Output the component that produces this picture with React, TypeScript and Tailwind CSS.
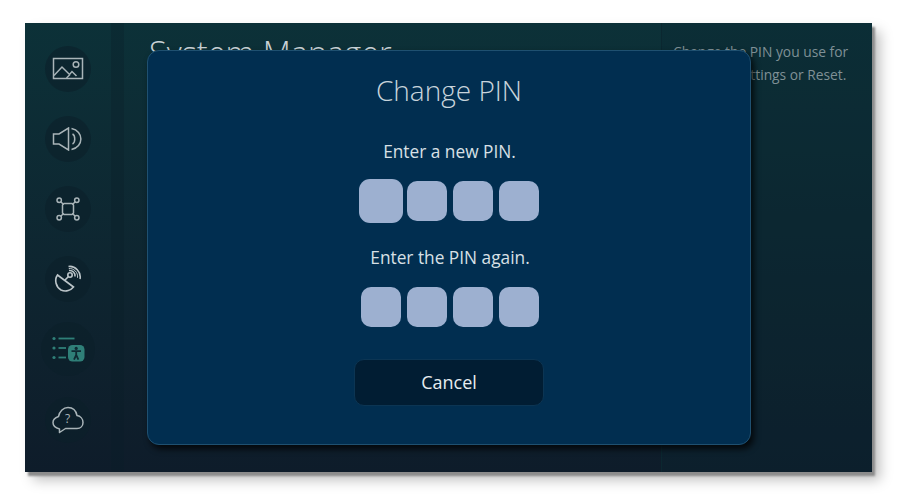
const PIN_BOXES = [0, 1, 2, 3];

function IconCircle({ children, active }: { children: React.ReactNode; active?: boolean }) {
  return (
    <div className={`flex items-center justify-center rounded-full bg-[#0c2029]/60 ${active ? "h-[54px] w-[54px]" : "h-[46px] w-[46px]"}`}>
      {children}
    </div>
  );
}

function PictureIcon() {
  return (
    <svg width="32" height="24" viewBox="0 0 32 24" fill="none" stroke="#a9b4b8" strokeWidth="1.5">
      <rect x="1.5" y="1.5" width="29" height="20" />
      <path d="M2 18.5 L10 10 L17.5 17.5 L20 14.5 L24.5 19" />
      <path d="M14.5 21 L18 17.5" />
      <circle cx="24" cy="7.5" r="2.8" />
    </svg>
  );
}

function SoundIcon() {
  return (
    <svg width="32" height="24" viewBox="0 0 32 24" fill="none" stroke="#a9b4b8" strokeWidth="1.5">
      <path d="M1.5 7 H7 L16.5 1 V23 L7 17 H1.5 Z" />
      <path d="M20.5 7 C23.5 8.5 23.5 15.5 20.5 17" />
      <path d="M19.5 1.5 C32 4 32 20 19.5 22.5" />
    </svg>
  );
}

function NetworkIcon() {
  return (
    <svg width="28" height="28" viewBox="0 0 28 28" fill="none" stroke="#a9b4b8" strokeWidth="1.5">
      <path d="M10 8.5 H18 L19.5 10 V18 L18 19.5 H10 L8.5 18 V10 Z" />
      <circle cx="5.2" cy="5.2" r="2.2" />
      <circle cx="22.8" cy="5.2" r="2.2" />
      <circle cx="5.2" cy="22.8" r="2.2" />
      <circle cx="22.8" cy="22.8" r="2.2" />
      <path d="M6.8 6.8 L9.5 9.5 M21.2 6.8 L18.5 9.5 M6.8 21.2 L9.5 18.5 M21.2 21.2 L18.5 18.5" />
    </svg>
  );
}

function BroadcastIcon() {
  return (
    <svg width="28" height="28" viewBox="0 0 28 28" fill="none" stroke="#bcc5c9" strokeWidth="1.6">
      <path d="M3.5 10 C0 15 2 22 7 25 C12 27.5 17 25 19.5 22 Z" />
      <path d="M11 15 L14.5 11.5" />
      <circle cx="16" cy="10" r="2.2" />
      <path d="M15 5.5 C18.5 5 21.5 8 21 11.5" />
      <path d="M14.5 1.5 C21 0.5 27.5 7 26 14" />
      <path d="M14.8 3.5 C19.5 3 24.5 7.5 23.5 12.8" strokeWidth="1" />
    </svg>
  );
}

function AccessibilityListIcon() {
  return (
    <svg width="34" height="26" viewBox="0 0 34 26" fill="none">
      <g fill="#2f7f78">
        <circle cx="3" cy="2.5" r="1.6" />
        <circle cx="3" cy="12" r="1.6" />
        <circle cx="3" cy="21.5" r="1.6" />
        <rect x="7.5" y="1.6" width="16" height="1.8" />
        <rect x="7.5" y="11.1" width="7.5" height="1.8" />
        <rect x="7.5" y="20.6" width="7.5" height="1.8" />
        <rect x="17" y="9" width="16.5" height="16.5" rx="4.5" />
      </g>
      <circle cx="25.2" cy="12.4" r="1.6" fill="#0f2a33" />
      <path d="M20.5 15.2 H30 M25.2 15.2 V19 M25.2 19 L23 23.6 M25.2 19 L27.4 23.6" stroke="#0f2a33" strokeWidth="1.8" />
    </svg>
  );
}

function HelpCloudIcon() {
  return (
    <svg width="32" height="28" viewBox="0 0 32 28" fill="none" stroke="#a9b4b8" strokeWidth="1.5" strokeLinejoin="round">
      <path d="M7.5 23 C3.5 22 1 19.5 1 16.5 C1 13.5 3.5 11.5 6.5 10.5 C7.5 5 11.5 1.5 16 1.5 C20.5 1.5 24 4.5 25 9.5 C28.5 10 31 13 31 16.5 C31 20 28.5 22.5 25 22.5 H13.5 L7.5 26.5 Z" />
      <text x="15.5" y="17" fontSize="12" fill="#a9b4b8" stroke="none" textAnchor="middle" fontFamily="Open Sans">?</text>
    </svg>
  );
}

function PinRow({ firstActive }: { firstActive?: boolean }) {
  return (
    <div className="flex items-center justify-center gap-[6px]">
      {PIN_BOXES.map((i) => (
        <div
          key={i}
          className={
            firstActive && i === 0
              ? "-mx-[2px] h-[44px] w-[44px] rounded-[11px] bg-[#9db0d0]"
              : "h-[40px] w-[40px] rounded-[10px] bg-[#9db0d0]"
          }
        />
      ))}
    </div>
  );
}

export default function App() {
  return (
    <div className="h-[500px] w-[900px] overflow-hidden bg-white pl-[25px] pt-[23px] font-['Open_Sans',sans-serif]">
      <div className="relative flex h-[449px] w-[847px] bg-gradient-to-b from-[#0c3138] to-[#0e1c2a] shadow-[3px_4px_2px_#8c8c8c,8px_8px_12px_rgba(0,0,0,0.25)]">
        {/* Sidebar */}
        <div className="flex w-[86px] shrink-0 flex-col items-center gap-[24px] pt-[23px]">
          <IconCircle><PictureIcon /></IconCircle>
          <IconCircle><SoundIcon /></IconCircle>
          <IconCircle><NetworkIcon /></IconCircle>
          <IconCircle><BroadcastIcon /></IconCircle>
          <div className="-my-1"><IconCircle active><AccessibilityListIcon /></IconCircle></div>
          <div className="mt-px"><IconCircle><HelpCloudIcon /></IconCircle></div>
        </div>
        <div className="w-[13px] shrink-0 bg-[#0b1f28]/30" />

        {/* Main */}
        <div className="flex-1 pl-[25px] pt-[11px]">
          <h1 className="whitespace-nowrap text-[32.5px] font-light leading-[38px] text-[#c9d2d6]">System Manager</h1>
        </div>

        {/* Help panel */}
        <div className="w-[211px] shrink-0 border-l border-[#0b2730] bg-[#0b2831]/30 pl-[11px] pt-[17px] text-[13.8px] leading-[23px] text-[#7f9096]">
          <p>Change the PIN you use for</p>
          <p className="pl-[62px]">Settings or Reset.</p>
        </div>

        {/* Change PIN dialog */}
        <div className="absolute left-[122px] top-[27px] flex h-[395px] w-[604px] flex-col items-center rounded-[12px] border border-[#1f5070] bg-[#012e50] pt-[19px] shadow-[3px_4px_6px_rgba(0,0,0,0.75)]">
          <h2 className="text-[28px] font-light leading-[40px] text-[#c8d4dc]">Change PIN</h2>
          <p className="ml-[1px] mt-[30px] text-[17.3px] leading-[24px] text-[#d8e0e6]">Enter a new PIN.</p>
          <div className="ml-[2px] mt-[15px]"><PinRow firstActive /></div>
          <p className="ml-[2px] mt-[23px] text-[17.3px] leading-[24px] text-[#d8e0e6]">Enter the PIN again.</p>
          <div className="ml-[2px] mt-[17px]"><PinRow /></div>
          <button className="mt-[32px] flex h-[47px] w-[190px] items-center justify-center rounded-[10px] border border-[#0c3553] bg-[#011d33] text-[18px] font-medium text-[#e6ecf0]">
            Cancel
          </button>
        </div>
      </div>
    </div>
  );
}
